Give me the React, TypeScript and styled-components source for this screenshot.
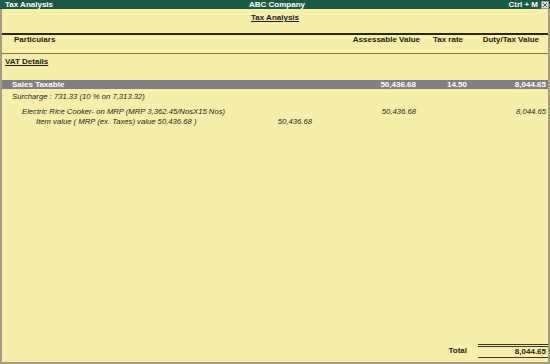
import React from 'react'
import styled, { createGlobalStyle } from 'styled-components'

const Global = createGlobalStyle`
  html, body {
    margin: 0;
    padding: 0;
    background: #f8eeab;
  }
  body {
    font-family: "Liberation Sans", Arial, sans-serif;
    font-size: 8px;
    color: #1c1c14;
  }
`

const Window = styled.div`
  width: 550px;
  height: 364px;
  display: flex;
  flex-direction: column;
  box-sizing: border-box;
`

const TitleBar = styled.div`
  height: 9px;
  background: #1d5a46;
  color: #ffffff;
  font-weight: bold;
  line-height: 9px;
  display: grid;
  grid-template-columns: 1fr auto 1fr;
  align-items: center;
  padding: 0 1px 0 5px;
`

const TitleRight = styled.div`
  display: flex;
  justify-content: flex-end;
  align-items: center;
  gap: 3px;
`

const Body = styled.div`
  flex: 1;
  display: flex;
  flex-direction: column;
  border-left: 2px solid #a39d85;
  border-right: 2px solid #a39d85;
  border-bottom: 2px solid #a39d85;
  min-height: 0;
`

const ReportTitle = styled.div`
  margin-top: 4px;
  line-height: 10px;
  text-align: center;
  font-weight: bold;
  text-decoration: underline;
`

const Grid = styled.div<{ $bold?: boolean }>`
  display: grid;
  grid-template-columns: 1fr 74px 50px 78px;
  line-height: 10px;
  font-weight: ${(p) => (p.$bold ? 'bold' : 'normal')};
`

const HeaderRow = styled(Grid)`
  margin-top: 10px;
  border-top: 2px solid #2a2818;
  border-bottom: 1px solid #807650;
  padding-bottom: 8px;
`

const Cell = styled.div<{ $pad?: number; $left?: number }>`
  text-align: right;
  padding-right: ${(p) => p.$pad ?? 0}px;
  padding-left: ${(p) => p.$left ?? 0}px;
  white-space: nowrap;
`

const Label = styled.div<{ $indent: number; $italic?: boolean }>`
  padding-left: ${(p) => p.$indent}px;
  font-style: ${(p) => (p.$italic ? 'italic' : 'normal')};
  white-space: nowrap;
  display: flex;
  justify-content: space-between;
`

const SectionTitle = styled.div`
  margin-top: 3px;
  padding-left: 3px;
  line-height: 10px;
  font-weight: bold;
  text-decoration: underline;
`

const HighlightRow = styled(Grid)`
  margin-top: 13px;
  background: #808080;
  color: #ffffff;
  line-height: 9px;
  font-weight: bold;
`

const ItalicRow = styled(Grid)<{ $gap?: number }>`
  margin-top: ${(p) => p.$gap ?? 0}px;
  font-style: italic;
  font-size: 7.7px;
`

const Spacer = styled.div`
  flex: 1;
`

const TotalRow = styled(Grid)`
  margin-bottom: 4px;
  align-items: stretch;
`

const TotalLabel = styled(Cell)`
  font-weight: bold;
  padding-top: 2px;
`

const TotalValue = styled(Cell)`
  margin-left: 8px;
  font-weight: bold;
  border-top: 3px double #3a3622;
  border-bottom: 1px solid #3a3622;
  line-height: 10px;
`

const CloseIcon = () => (
  <svg width="8" height="8" viewBox="0 0 8 8">
    <rect x="0.5" y="0.5" width="7" height="7" fill="#dcdcd0" stroke="#9a9a90" />
    <path d="M2 2 L6 6 M6 2 L2 6" stroke="#555" strokeWidth="1" />
  </svg>
)

export default function App() {
  return (
    <Window>
      <Global />
      <TitleBar>
        <span>Tax Analysis</span>
        <span>ABC Company</span>
        <TitleRight>
          <span>Ctrl + M</span>
          <CloseIcon />
        </TitleRight>
      </TitleBar>
      <Body>
        <ReportTitle>Tax Analysis</ReportTitle>
        <HeaderRow $bold>
          <Label $indent={12}>Particulars</Label>
          <Cell $pad={0}>Assessable Value</Cell>
          <Cell $pad={7}>Tax rate</Cell>
          <Cell $pad={9}>Duty/Tax Value</Cell>
        </HeaderRow>
        <SectionTitle>VAT Details</SectionTitle>
        <HighlightRow>
          <Label $indent={10}>Sales Taxable</Label>
          <Cell $pad={4}>50,436.68</Cell>
          <Cell $pad={3}>14.50</Cell>
          <Cell $pad={2}>8,044.65</Cell>
        </HighlightRow>
        <ItalicRow $gap={3}>
          <Label $indent={10} $italic>Surcharge : 731.33 (10 % on 7,313.32)</Label>
        </ItalicRow>
        <ItalicRow $gap={5}>
          <Label $indent={20} $italic>Electric Rice Cooker- on MRP (MRP 3,362.45/NosX15 Nos)</Label>
          <Cell $pad={4}>50,436.68</Cell>
          <Cell />
          <Cell $pad={2}>8,044.65</Cell>
        </ItalicRow>
        <ItalicRow>
          <Label $indent={34} $italic>
            <span>Item value ( MRP (ex. Taxes) value 50,436.68 )</span>
            <Cell as="span" $pad={34}>50,436.68</Cell>
          </Label>
        </ItalicRow>
        <Spacer />
        <TotalRow>
          <div />
          <div />
          <TotalLabel $pad={3}>Total</TotalLabel>
          <TotalValue $pad={2}>8,044.65</TotalValue>
        </TotalRow>
      </Body>
    </Window>
  )
}
